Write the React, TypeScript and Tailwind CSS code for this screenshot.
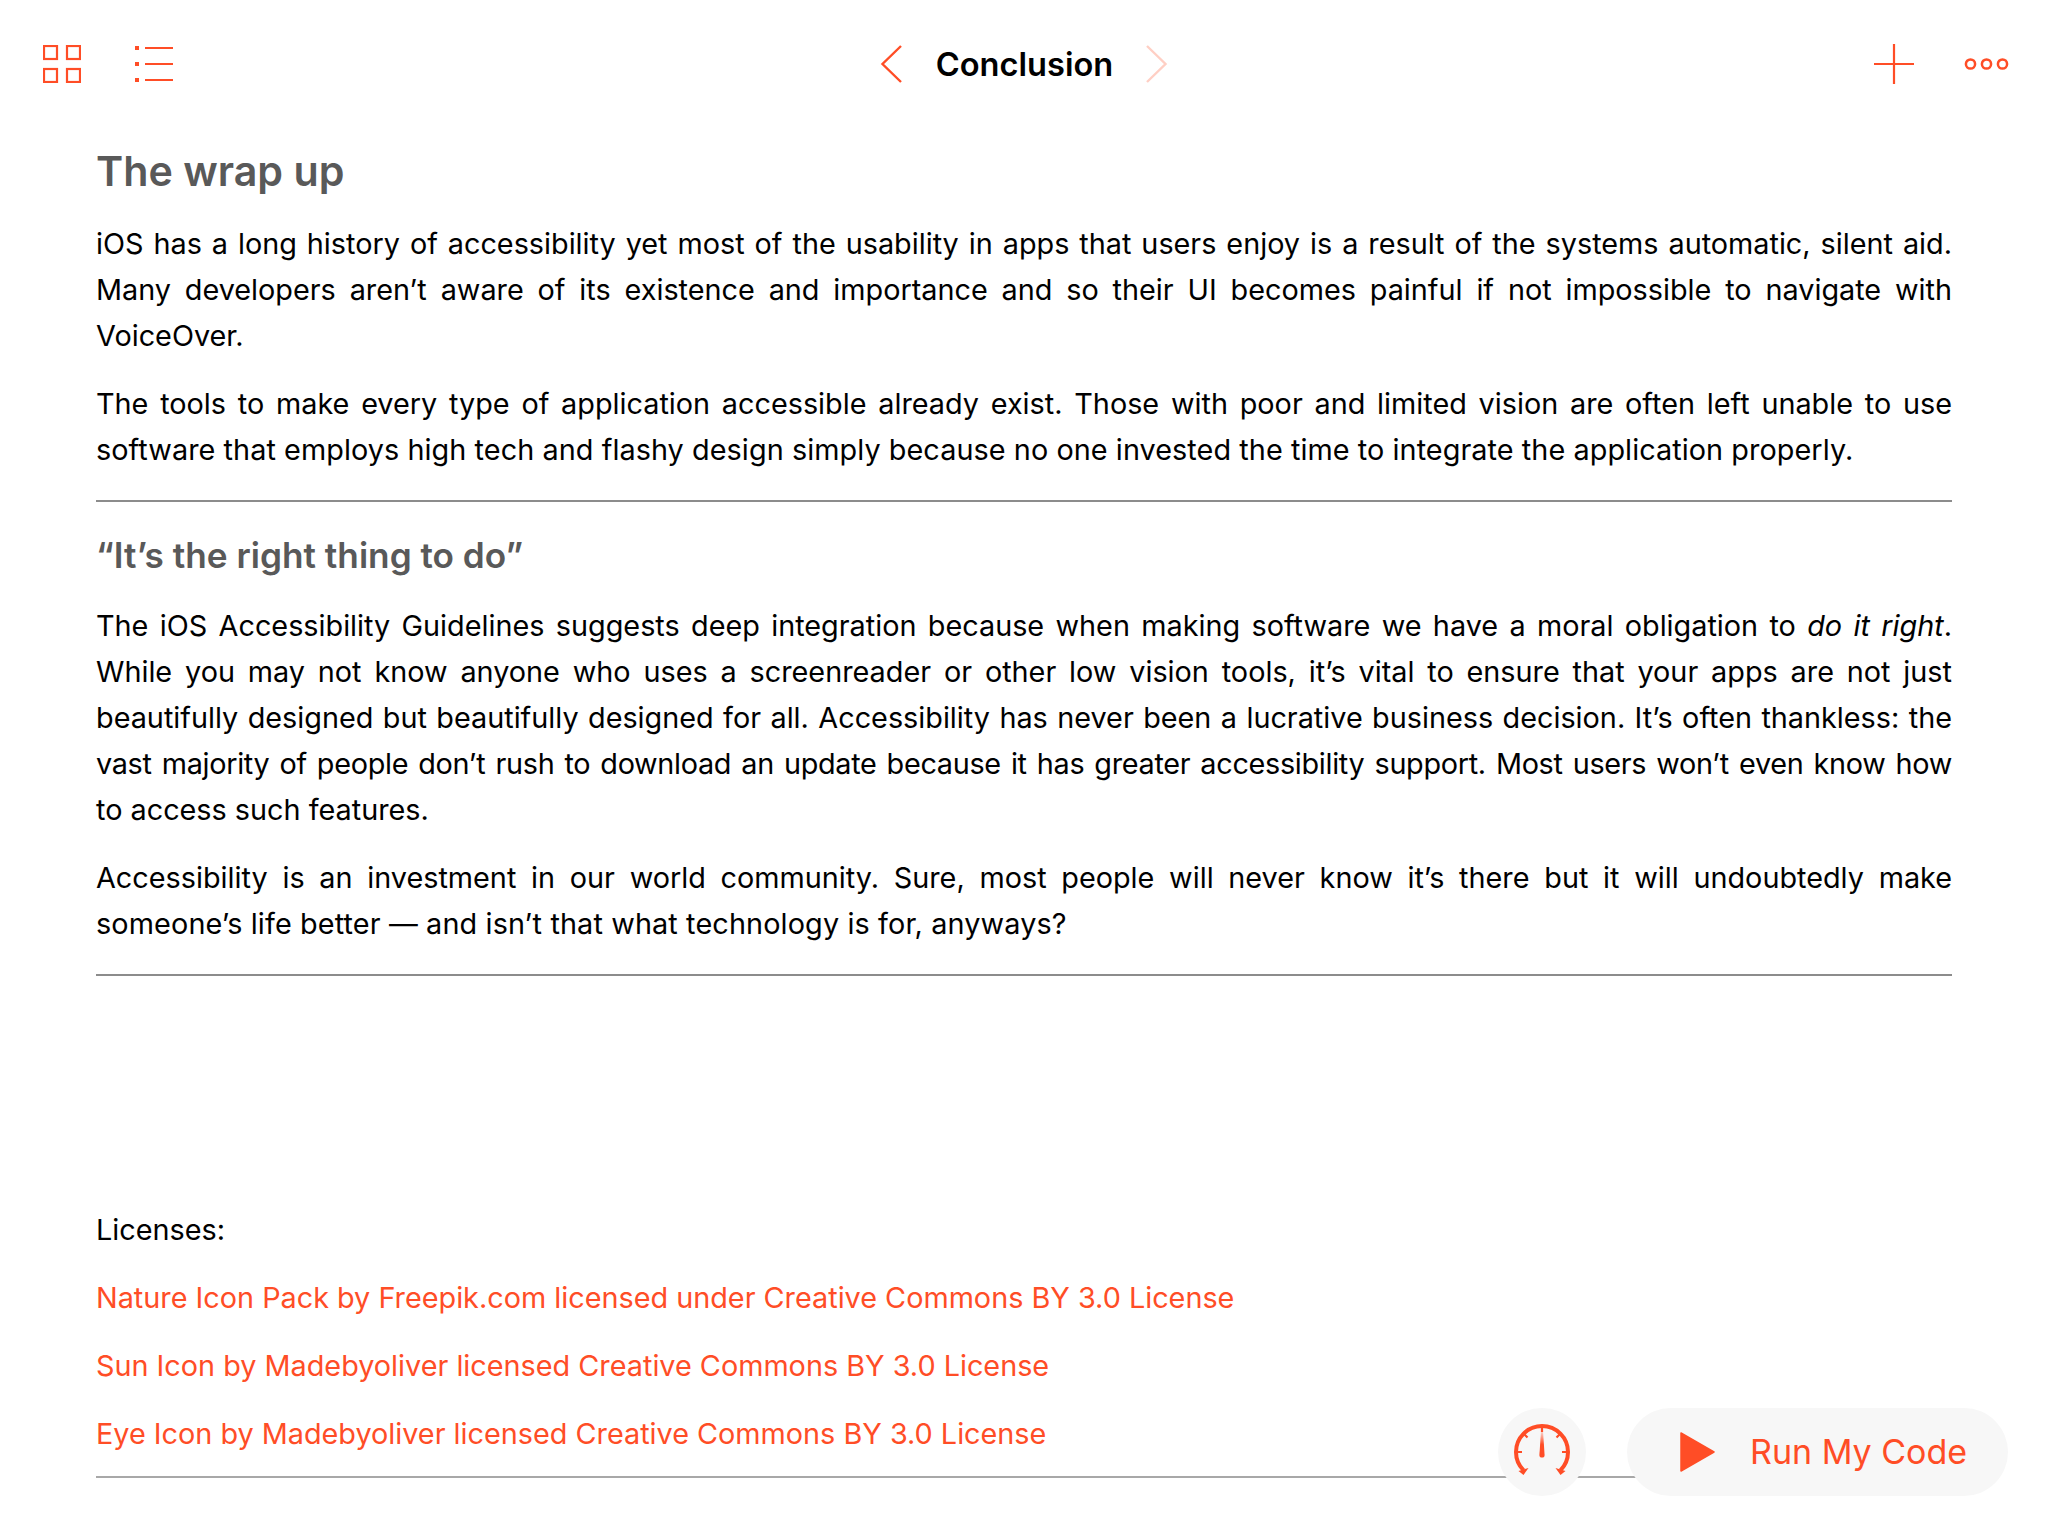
const C = "#ff4d26";

function Line({ children, last }: { children: React.ReactNode; last?: boolean }) {
  return <span className={last ? "block h-[46px] text-left" : "block h-[46px] text-justify [text-align-last:justify]"}>{children}</span>;
}

function Para({ lines, className }: { lines: React.ReactNode[]; className?: string }) {
  return (
    <p className={className}>
      {lines.map((l, i) => (
        <Line key={i} last={i === lines.length - 1}>{l}</Line>
      ))}
    </p>
  );
}

function TopBar() {
  return (
    <div className="relative flex h-[128px] items-center justify-between">
      <div className="flex items-center">
        <svg className="ml-[43px]" width="38" height="38" viewBox="0 0 38 38" fill="none" stroke={C} strokeWidth="2.2">
          <rect x="1" y="1" width="13" height="13" />
          <rect x="24" y="1" width="13" height="13" />
          <rect x="1" y="24" width="13" height="13" />
          <rect x="24" y="24" width="13" height="13" />
        </svg>
        <svg className="ml-[54px]" width="38" height="36" viewBox="0 0 38 36" fill="none">
          <rect x="0" y="0" width="4" height="4" fill={C} />
          <rect x="0" y="16" width="4" height="4" fill={C} />
          <rect x="0" y="32" width="4" height="4" fill={C} />
          <path d="M10 2H38M10 18H38M10 34H38" stroke={C} strokeWidth="2" />
        </svg>
      </div>
      <div className="absolute left-0 right-0 top-0 flex h-[128px] items-center justify-center">
        <svg width="22" height="38" viewBox="0 0 22 38" fill="none" stroke={C} strokeWidth="2.4">
          <path d="M21 1 L2.5 19 L21 37" />
        </svg>
        <span className="ml-[34px] mr-[33px] text-[32.6px] font-semibold text-black">Conclusion</span>
        <svg width="22" height="38" viewBox="0 0 22 38" fill="none" stroke="#ffcfc4" strokeWidth="2.4">
          <path d="M1 1 L19.5 19 L1 37" />
        </svg>
      </div>
      <div className="flex items-center">
        <svg width="40" height="40" viewBox="0 0 40 40" stroke={C} strokeWidth="2.2">
          <path d="M0 20H40M20 0V40" />
        </svg>
        <svg className="ml-[50px] mr-[39px]" width="45" height="14" viewBox="0 0 45 14" fill="none" stroke={C} strokeWidth="2.5">
          <circle cx="6.5" cy="7" r="4.6" />
          <circle cx="22.5" cy="7" r="4.6" />
          <circle cx="38.5" cy="7" r="4.6" />
        </svg>
      </div>
    </div>
  );
}

export default function App() {
  return (
    <div className="relative h-[1536px] w-[2048px] overflow-hidden bg-white text-[28.8px] leading-[46px] text-black [font-family:Inter,'Liberation_Sans',sans-serif]">
      <TopBar />
      <div className="px-[96px]">
        <h1 className="mt-[19px] h-[48px] text-[41.2px] leading-[48px] font-semibold text-[#595959]">The wrap up</h1>
        <Para
          className="mt-[26px]"
          lines={[
            "iOS has a long history of accessibility yet most of the usability in apps that users enjoy is a result of the systems automatic, silent aid.",
            "Many developers aren’t aware of its existence and importance and so their UI becomes painful if not impossible to navigate with",
            "VoiceOver.",
          ]}
        />
        <Para
          className="mt-[22px]"
          lines={[
            "The tools to make every type of application accessible already exist. Those with poor and limited vision are often left unable to use",
            <span className="tracking-[0.07px]">software that employs high tech and flashy design simply because no one invested the time to integrate the application properly.</span>,
          ]}
        />
        <hr className="mt-[27px] border-t-[2px] border-[#8c8c8c]" />
        <h2 className="mt-[31px] h-[44px] text-[35.2px] leading-[44px] font-semibold text-[#595959]">“It’s the right thing to do”</h2>
        <Para
          className="mt-[26px]"
          lines={[
            <>The iOS Accessibility Guidelines suggests deep integration because when making software we have a moral obligation to <em>do it right</em>.</>,
            "While you may not know anyone who uses a screenreader or other low vision tools, it’s vital to ensure that your apps are not just",
            "beautifully designed but beautifully designed for all. Accessibility has never been a lucrative business decision. It’s often thankless: the",
            <span className="tracking-[-0.3px]">vast majority of people don’t rush to download an update because it has greater accessibility support. Most users won’t even know how</span>,
            "to access such features.",
          ]}
        />
        <Para
          className="mt-[22px]"
          lines={[
            "Accessibility is an investment in our world community. Sure, most people will never know it’s there but it will undoubtedly make",
            <span className="tracking-[0.13px]">someone’s life better — and isn’t that what technology is for, anyways?</span>,
          ]}
        />
        <hr className="mt-[27px] border-t-[2px] border-[#8c8c8c]" />
        <p className="mt-[231px] h-[46px]">Licenses:</p>
        <p className="mt-[22px] h-[46px] text-[#ff4d26]">Nature Icon Pack by Freepik.com licensed under Creative Commons BY 3.0 License</p>
        <p className="mt-[22px] h-[46px] text-[#ff4d26]">Sun Icon by Madebyoliver licensed Creative Commons BY 3.0 License</p>
        <p className="mt-[22px] h-[46px] text-[#ff4d26]">Eye Icon by Madebyoliver licensed Creative Commons BY 3.0 License</p>
        <hr className="mt-[19px] border-t-[2px] border-[#a8a8a8]" />
      </div>

      <div className="absolute left-[1498px] top-[1408px] flex h-[88px] w-[88px] items-center justify-center rounded-full bg-[#f7f7f7]">
        <svg width="60" height="60" viewBox="0 0 60 60" fill="none">
          <defs>
            <linearGradient id="needle" x1="0" y1="0" x2="0" y2="1">
              <stop offset="0" stopColor={C} stopOpacity="0.15" />
              <stop offset="0.5" stopColor={C} />
            </linearGradient>
          </defs>
          <path d="M11.6 48.4 A26 26 0 1 1 48.4 48.4" stroke={C} strokeWidth="4" />
          <path d="M6.5 49 L11.5 53 L16.5 46 Z M53.5 49 L48.5 53 L43.5 46 Z" fill={C} />
          <path d="M30 4V10M4 30H10M50 30H56M12 12L15.5 15.5M48 12L44.5 15.5" stroke={C} strokeWidth="2.2" />
          <path d="M29 9 L31 9 L32.6 33 A2.6 2.6 0 0 1 27.4 33 Z" fill="url(#needle)" />
        </svg>
      </div>
      <div className="absolute left-[1627px] top-[1408px] flex h-[88px] w-[381px] items-center rounded-full bg-[#f7f7f7]">
        <svg className="ml-[53px]" width="35" height="40" viewBox="0 0 35 40">
          <path d="M1 1 L34 20 L1 39 Z" fill={C} stroke={C} strokeWidth="1.5" strokeLinejoin="round" />
        </svg>
        <span className="ml-[35px] whitespace-nowrap text-[34px] leading-none text-[#ff4d26]">Run My Code</span>
      </div>
    </div>
  );
}
